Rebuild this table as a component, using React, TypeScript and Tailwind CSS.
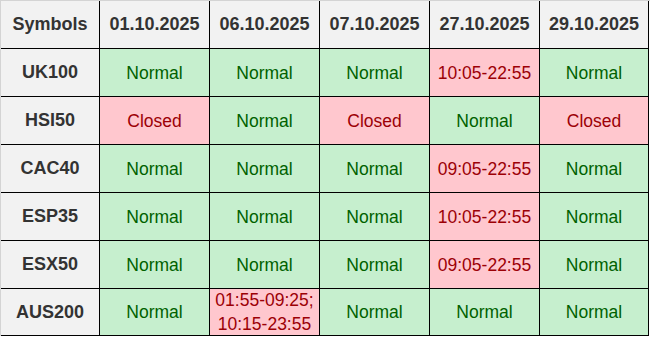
import React from 'react';

type Status = { text: string; ok: boolean };

const dates = ['01.10.2025', '06.10.2025', '07.10.2025', '27.10.2025', '29.10.2025'];

const n = (): Status => ({ text: 'Normal', ok: true });
const c = (): Status => ({ text: 'Closed', ok: false });
const h = (text: string): Status => ({ text, ok: false });

const rows: { symbol: string; cells: Status[] }[] = [
    { symbol: 'UK100', cells: [n(), n(), n(), h('10:05-22:55'), n()] },
    { symbol: 'HSI50', cells: [c(), n(), c(), n(), c()] },
    { symbol: 'CAC40', cells: [n(), n(), n(), h('09:05-22:55'), n()] },
    { symbol: 'ESP35', cells: [n(), n(), n(), h('10:05-22:55'), n()] },
    { symbol: 'ESX50', cells: [n(), n(), n(), h('09:05-22:55'), n()] },
    { symbol: 'AUS200', cells: [n(), h('01:55-09:25; 10:15-23:55'), n(), n(), n()] },
];

const headCell = 'bg-[#f2f2f2] border-r border-b border-black flex items-center justify-center font-bold text-[18px] text-[#333333]';

export default function App() {
    return (
        <div className="w-[650px] h-[337px] bg-white overflow-hidden font-['Liberation_Sans',Arial,sans-serif] text-[17.5px]">
            <div className="grid grid-cols-[99px_110px_110px_110px_110px_109px] grid-rows-[48px_48px_48px_48px_48px_48px_47px] border-l border-t border-[#d4d4d4] w-[650px]">
                <div className={headCell}>Symbols</div>
                {dates.map((d) => (
                    <div key={d} className={headCell}>
                        {d}
                    </div>
                ))}
                {rows.map((row) => (
                    <React.Fragment key={row.symbol}>
                        <div className={headCell}>{row.symbol}</div>
                        {row.cells.map((cell, i) => (
                            <div
                                key={i}
                                className={`border-r border-b border-black flex items-center justify-center text-center leading-6 px-1 ${cell.ok
                                    ? 'bg-[#c6efce] text-[#006100]'
                                    : 'bg-[#ffc7ce] text-[#9c0006]'
                                    }`}
                            >
                                {cell.text}
                            </div>
                        ))}
                    </React.Fragment>
                ))}
            </div>
        </div>
    );
}
